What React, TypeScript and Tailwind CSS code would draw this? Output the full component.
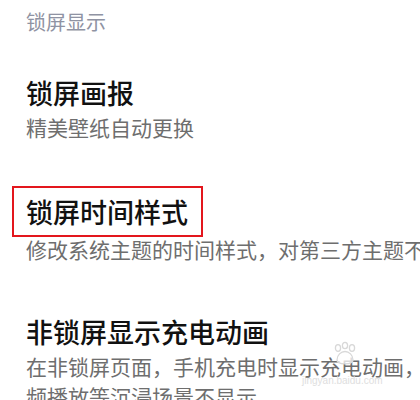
import React from "react";

const cjk = { fontFamily: '"Noto Sans CJK SC", "Noto Sans", sans-serif' };

// faint jingyan watermark sitting over the last description
function Watermark() {
  return (
    <>
      <svg
        className="absolute left-[332px] top-[341px] pointer-events-none"
        width="26"
        height="24"
        viewBox="0 0 26 24"
        fill="rgba(255,255,255,0.75)"
        stroke="#d8d8d8"
        strokeWidth="1.3"
      >
        <ellipse cx="6" cy="7" rx="2.6" ry="3.4" />
        <ellipse cx="13" cy="4.5" rx="2.6" ry="3.2" />
        <ellipse cx="20" cy="7" rx="2.6" ry="3.4" />
        <path d="M5 19c0-5 4-8.5 8-8.5s8 3.5 8 8.5c0 3-3 3.8-8 3.8S5 22 5 19z" />
      </svg>
      <span
        className="absolute left-[302px] top-[376px] text-[10px] leading-[10px] text-[#dedede] pointer-events-none"
        style={{ fontFamily: '"Liberation Sans", sans-serif' }}
      >
        jingyan.baidu.com
      </span>
    </>
  );
}

export default function App() {
  return (
    <div className="relative w-[420px] h-[400px] overflow-hidden bg-white" style={cjk}>
      <div className="w-[480px] pl-[26px]">
        <div className="pt-[12px] text-[20px] leading-[20px] text-[#8f93a3]">锁屏显示</div>

        <div className="mt-[44px] text-[27px] leading-[34px] font-medium text-[#111111]">锁屏画报</div>
        <div className="mt-[2px] text-[21px] leading-[30px] text-[#6e6e6e]">精美壁纸自动更换</div>

        <div className="relative mt-[53px] text-[27px] leading-[34px] font-medium text-[#111111]">
          锁屏时间样式
          <div className="absolute left-[-14px] top-[-9px] w-[191px] h-[51px] border-2 border-[#e3161d]" />
        </div>
        <div className="mt-[5px] text-[21px] leading-[30px] text-[#6e6e6e] whitespace-nowrap">
          修改系统主题的时间样式，对第三方主题不生效
        </div>

        <div className="mt-[51px] text-[27px] leading-[34px] font-medium text-[#111111]">非锁屏显示充电动画</div>
        <div className="mt-[2px] text-[21px] leading-[30px] text-[#6e6e6e] whitespace-nowrap">
          <div>在非锁屏页面，手机充电时显示充电动画，视</div>
          <div>频播放等沉浸场景不显示</div>
        </div>
      </div>
      <Watermark />
    </div>
  );
}
